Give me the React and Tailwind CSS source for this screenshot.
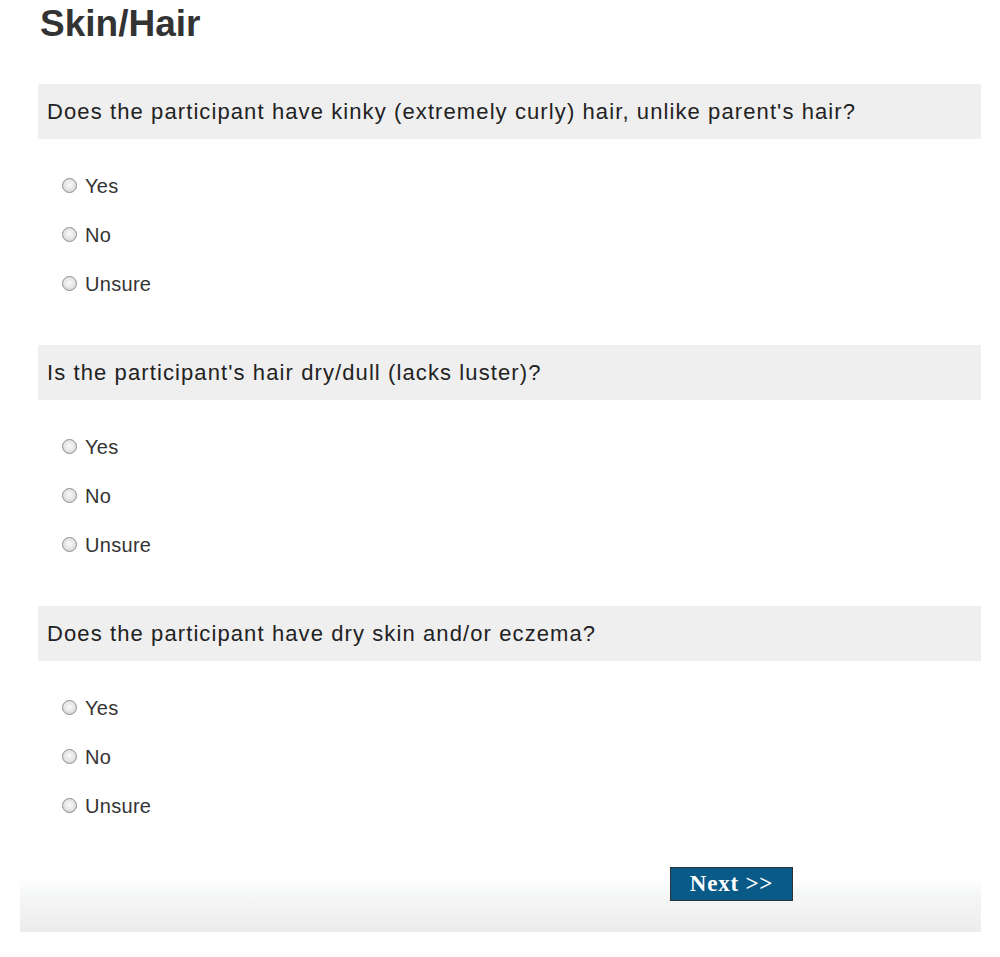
import React, { useState } from "react";

const questions = [
    { id: "kinky", text: "Does the participant have kinky (extremely curly) hair, unlike parent's hair?" },
    { id: "dull", text: "Is the participant's hair dry/dull (lacks luster)?" },
    { id: "eczema", text: "Does the participant have dry skin and/or eczema?" }
];

const choices = ["Yes", "No", "Unsure"];

function Radio({ checked }) {
    return (
        <span className="w-[15px] h-[15px] rounded-full border border-[#8e8e8e] bg-[radial-gradient(circle_at_50%_45%,#fafafa_0%,#e4e4e4_55%,#c4c4c4_100%)] flex items-center justify-center shrink-0">
            {checked && <span className="w-[6px] h-[6px] rounded-full bg-[#333]" />}
        </span>
    );
}

export default function App() {
    const [answers, setAnswers] = useState({});

    return (
        <div className="bg-white min-h-[957px] font-['Liberation_Sans',Arial,sans-serif]">
            <div className="ml-[20px] w-[961px]">
                <div className="pl-[18px]">
                    <h1 className="pl-[2px] pt-[3px] h-[45px] leading-[42px] text-[37px] font-bold text-[#333]">
                        Skin/Hair
                    </h1>

                    <div className="mt-[39px]">
                        {questions.map((q) => (
                            <div key={q.id} className="pb-[37px]">
                                <div className="h-[55px] bg-[#efefef] flex items-center pl-[9px] text-[22px] tracking-[1.1px] text-[#222]">
                                    {q.text}
                                </div>
                                <div className="pt-[22px] pl-[24px]">
                                    {choices.map((c) => (
                                        <label
                                            key={c}
                                            className="h-[49px] flex items-center gap-[8px] cursor-pointer text-[20px] tracking-[0.3px] text-[#333]"
                                            onClick={() => setAnswers({ ...answers, [q.id]: c })}
                                        >
                                            <Radio checked={answers[q.id] === c} />
                                            <span>{c}</span>
                                        </label>
                                    ))}
                                </div>
                            </div>
                        ))}
                    </div>
                </div>

                {/* footer with the next button */}
                <div className="-mt-[7px] pt-[7px] pb-[31px] pl-[650px] bg-[linear-gradient(to_bottom,#ffffff_0%,#ffffff_25%,#f6f7f7_45%,#ececec_100%)]">
                    <button className="w-[123px] h-[34px] bg-[#0a5a88] border border-[#2f3236] text-white font-bold text-[23px] tracking-[0.8px] font-['Liberation_Serif','Times_New_Roman',serif] flex items-center justify-center">
                        Next &gt;&gt;
                    </button>
                </div>
            </div>
        </div>
    );
}
